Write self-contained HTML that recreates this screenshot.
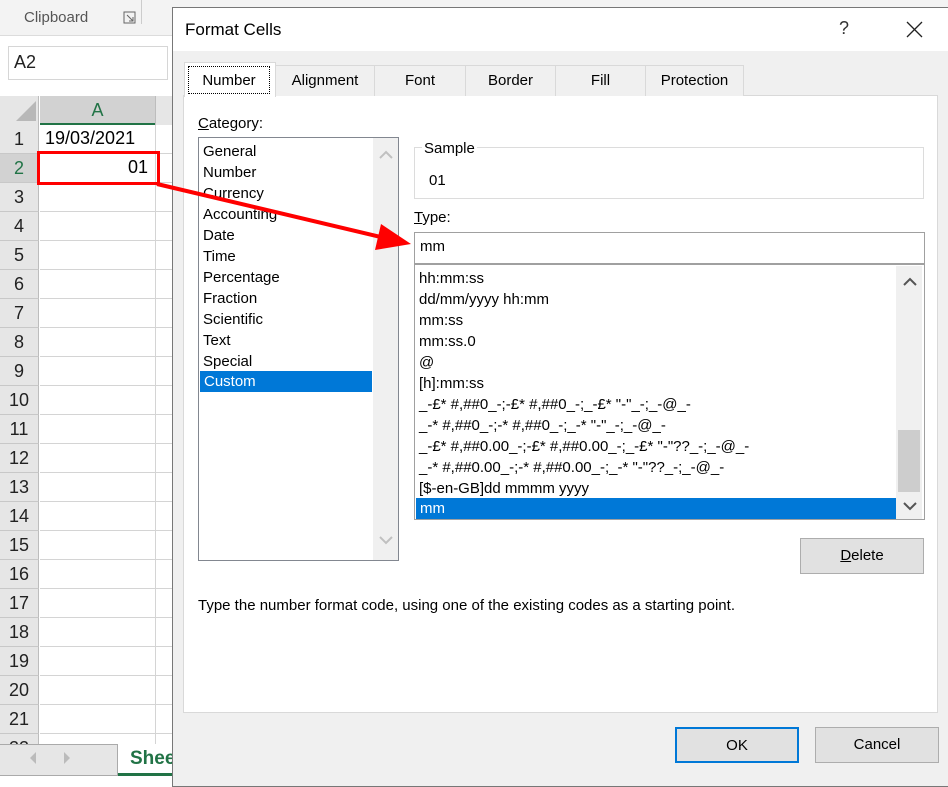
<!DOCTYPE html>
<html><head><meta charset="utf-8"><style>
*{margin:0;padding:0;box-sizing:border-box}
body{width:948px;height:776px;overflow:hidden;position:relative;background:#fff;font-family:"Liberation Sans",sans-serif;font-size:15px;color:#000}
.a{position:absolute}
.t{position:absolute;white-space:nowrap}
.rh{position:absolute;left:0;width:39px;height:29px;background:#e6e6e6;border-bottom:1px solid #c8c8c8;border-right:1px solid #bdbdbd;text-align:center;font-size:18px;line-height:29px;color:#222}
.rl{position:absolute;left:40px;width:908px;height:1px;background:#d4d4d4}
.tab{position:absolute;top:65px;height:31px;border:1px solid #d9d9d9;border-bottom:none;background:#f0f0f0;text-align:center;line-height:30px;font-size:15px}
.li{position:absolute;left:0;height:21px;line-height:21px;padding-left:4px;white-space:nowrap;font-size:15px}
.btn{position:absolute;height:36px;background:#e1e1e1;border:1px solid #adadad;text-align:center;line-height:34px;font-size:15px}
</style></head><body>
<div class="a" style="left:0;top:0;width:948px;height:36px;background:#f3f3f3;border-bottom:1px solid #dcdcdc"></div>
<div class="t" style="left:24px;top:9px;font-size:15px;color:#555">Clipboard</div>
<svg class="a" style="left:123px;top:11px" width="13" height="13"><path d="M1 1H12V12H1Z" stroke="#666" fill="none"/><path d="M4 4L10 10M10 6V10H6" stroke="#666" fill="none"/></svg>
<div class="a" style="left:141px;top:0;width:1px;height:24px;background:#ccc"></div>
<div class="a" style="left:8px;top:46px;width:160px;height:34px;border:1px solid #d6d6d6;background:#fff"></div>
<div class="t" style="left:14px;top:52px;font-size:18px;color:#222">A2</div>
<div class="a" style="left:0;top:96px;width:39px;height:29px;background:#e6e6e6;border-right:1px solid #bdbdbd"></div>
<div class="a" style="left:16px;top:101px;width:0;height:0;border-left:20px solid transparent;border-bottom:20px solid #b8b8b8"></div>
<div class="a" style="left:40px;top:96px;width:115px;height:29px;background:#d2d2d2;border-bottom:2px solid #217346;text-align:center;font-size:18px;line-height:28px;color:#217346">A</div>
<div class="a" style="left:155px;top:96px;width:793px;height:29px;background:#e6e6e6;border-left:1px solid #bdbdbd"></div>
<div class="a" style="left:155px;top:125px;width:1px;height:620px;background:#d4d4d4"></div>
<div id="rows"></div>
<div class="t" style="left:45px;top:128px;font-size:18px">19/03/2021</div>
<div class="t" style="left:128px;top:157px;font-size:18px">01</div>
<div class="a" style="left:37px;top:151px;width:123px;height:34px;border:3px solid #f00"></div>
<div class="a" style="left:0;top:744px;width:118px;height:32px;background:#e6e6e6;border:1px solid #aaa;border-left:none"></div>
<svg class="a" style="left:28px;top:751px" width="45" height="14"><path d="M8 1L2 7L8 13Z" fill="#bbb"/><path d="M36 1L42 7L36 13Z" fill="#bbb"/></svg>
<div class="a" style="left:118px;top:744px;width:60px;height:32px;background:#fff;border-bottom:3px solid #217346"></div>
<div class="t" style="left:130px;top:748px;font-size:19px;font-weight:bold;color:#217346">Shee</div>
<!-- dialog -->
<div class="a" style="left:172px;top:7px;width:790px;height:780px;background:#f0f0f0;border:1px solid #777"></div>
<div class="a" style="left:173px;top:8px;width:790px;height:43px;background:#fff"></div>
<div class="t" style="left:185px;top:20px;font-size:17px">Format Cells</div>
<div class="t" style="left:839px;top:18px;font-size:18px;color:#333">?</div>
<svg class="a" style="left:906px;top:21px" width="17" height="17"><path d="M1 1L16 16M16 1L1 16" stroke="#222" stroke-width="1.3"/></svg>
<div class="a" style="left:183px;top:95px;width:755px;height:618px;background:#fff;border:1px solid #d9d9d9"></div>
<div class="tab" style="left:275px;width:100px">Alignment</div>
<div class="tab" style="left:374px;width:92px">Font</div>
<div class="tab" style="left:465px;width:91px">Border</div>
<div class="tab" style="left:555px;width:91px">Fill</div>
<div class="tab" style="left:645px;width:99px">Protection</div>
<div class="a" style="left:184px;top:62px;width:92px;height:35px;background:#fff;border:1px solid #d9d9d9;border-bottom:none"></div>
<div class="a" style="left:188px;top:66px;width:82px;height:28px;border:1px dotted #000;text-align:center;line-height:28px">Number</div>
<div class="t" style="left:198px;top:115px"><u>C</u>ategory:</div>
<div class="a" style="left:198px;top:137px;width:201px;height:424px;border:1px solid #828790;background:#fff;overflow:hidden">
 <div class="a" style="left:174px;top:0;width:25px;height:422px;background:#f0f0f0"></div>
 <svg class="a" style="left:180px;top:12px" width="14" height="9"><path d="M1 8L7 2L13 8" stroke="#c0c0c0" stroke-width="2" fill="none"/></svg>
 <svg class="a" style="left:180px;top:398px" width="14" height="9"><path d="M1 1L7 7L13 1" stroke="#c0c0c0" stroke-width="2" fill="none"/></svg>
 <div class="li" style="top:3px">General</div>
 <div class="li" style="top:24px">Number</div>
 <div class="li" style="top:45px">Currency</div>
 <div class="li" style="top:66px">Accounting</div>
 <div class="li" style="top:87px">Date</div>
 <div class="li" style="top:108px">Time</div>
 <div class="li" style="top:129px">Percentage</div>
 <div class="li" style="top:150px">Fraction</div>
 <div class="li" style="top:171px">Scientific</div>
 <div class="li" style="top:192px">Text</div>
 <div class="li" style="top:213px">Special</div>
 <div class="li" style="top:233px;left:1px;width:172px;background:#0078d7;color:#fff">Custom</div>
</div>
<div class="a" style="left:414px;top:147px;width:510px;height:52px;border:1px solid #dcdcdc"></div>
<div class="t" style="left:422px;top:140px;background:#fff;padding:0 2px">Sample</div>
<div class="t" style="left:429px;top:172px">01</div>
<div class="t" style="left:414px;top:209px"><u>T</u>ype:</div>
<div class="a" style="left:414px;top:232px;width:511px;height:32px;border:1px solid #a0a0a0;background:#fff"></div>
<div class="t" style="left:420px;top:238px">mm</div>
<div class="a" style="left:414px;top:264px;width:511px;height:256px;border:1px solid #a0a0a0;background:#fff;overflow:hidden">
 <div class="a" style="left:481px;top:1px;width:26px;height:253px;background:#f0f0f0"></div>
 <div class="a" style="left:483px;top:165px;width:22px;height:62px;background:#cdcdcd"></div>
 <svg class="a" style="left:488px;top:12px" width="14" height="9"><path d="M1 8L7 2L13 8" stroke="#555" stroke-width="2" fill="none"/></svg>
 <svg class="a" style="left:488px;top:237px" width="14" height="9"><path d="M1 1L7 7L13 1" stroke="#555" stroke-width="2" fill="none"/></svg>
 <div class="li" style="top:3px">hh:mm:ss</div>
 <div class="li" style="top:24px">dd/mm/yyyy hh:mm</div>
 <div class="li" style="top:45px">mm:ss</div>
 <div class="li" style="top:66px">mm:ss.0</div>
 <div class="li" style="top:87px">@</div>
 <div class="li" style="top:108px">[h]:mm:ss</div>
 <div class="li" style="top:129px">_-£* #,##0_-;-£* #,##0_-;_-£* "-"_-;_-@_-</div>
 <div class="li" style="top:150px">_-* #,##0_-;-* #,##0_-;_-* "-"_-;_-@_-</div>
 <div class="li" style="top:171px">_-£* #,##0.00_-;-£* #,##0.00_-;_-£* "-"??_-;_-@_-</div>
 <div class="li" style="top:192px">_-* #,##0.00_-;-* #,##0.00_-;_-* "-"??_-;_-@_-</div>
 <div class="li" style="top:213px">[$-en-GB]dd mmmm yyyy</div>
 <div class="li" style="top:233px;left:1px;width:480px;background:#0078d7;color:#fff">mm</div>
</div>
<div class="btn" style="left:800px;top:538px;width:124px"><u>D</u>elete</div>
<div class="t" style="left:198px;top:597px">Type the number format code, using one of the existing codes as a starting point.</div>
<div class="btn" style="left:675px;top:727px;width:124px;border:2px solid #0078d7">OK</div>
<div class="btn" style="left:815px;top:727px;width:124px">Cancel</div>
<svg class="a" style="left:0;top:0" width="948" height="776"><line x1="157" y1="184" x2="385" y2="238" stroke="#f00" stroke-width="4"/><polygon points="411,244 375,250 381,224" fill="#f00"/></svg>
<script>
var h='';for(var i=1;i<=22;i++){var y=125+(i-1)*29;h+='<div class="rh" style="top:'+y+'px'+(i==2?';background:#d2d2d2;color:#217346':'')+'">'+i+'</div><div class="rl" style="top:'+(y+28)+'px"></div>';}
document.getElementById('rows').innerHTML=h;
</script>
</body></html>
